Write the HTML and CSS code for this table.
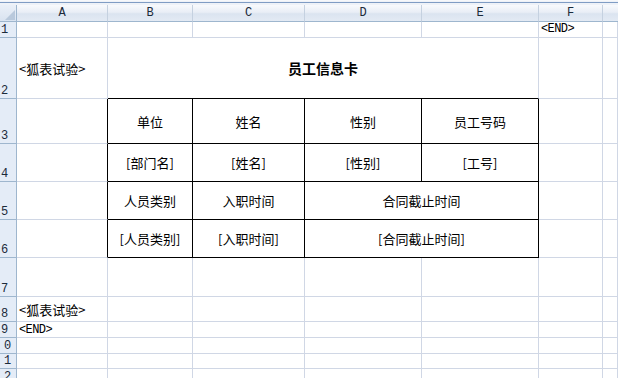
FILE: index.html
```html
<!DOCTYPE html>
<html>
<head>
<meta charset="utf-8">
<link rel="stylesheet" href="styles.css">
</head>
<body>
<div class="topbar"></div>
<div class="sheet">
  <div class="corner"><svg width="10" height="10" viewBox="0 0 10 10"><polygon points="10,0 10,10 0,10" fill="#b9c9dc"/></svg></div>
  <div class="colhdr">A</div>
  <div class="colhdr">B</div>
  <div class="colhdr">C</div>
  <div class="colhdr">D</div>
  <div class="colhdr">E</div>
  <div class="colhdr">F</div>
  <div class="colhdr last"></div>

  <!-- row 1 -->
  <div class="rowhdr"><span>1</span></div>
  <div class="cell"></div><div class="cell"></div><div class="cell"></div><div class="cell"></div><div class="cell"></div>
  <div class="cell mono top">&lt;END&gt;</div>
  <div class="cell"></div>

  <!-- row 2 -->
  <div class="rowhdr"><span>2</span></div>
  <div class="cell left">&lt;狐表试验&gt;</div>
  <div class="cell title span4 below">员工信息卡</div>
  <div class="cell"></div>
  <div class="cell"></div>

  <!-- row 3 -->
  <div class="rowhdr"><span>3</span></div>
  <div class="cell edge"></div>
  <div class="cell t">单位</div>
  <div class="cell t">姓名</div>
  <div class="cell t">性别</div>
  <div class="cell t">员工号码</div>
  <div class="cell"></div><div class="cell"></div>

  <!-- row 4 -->
  <div class="rowhdr"><span>4</span></div>
  <div class="cell edge"></div>
  <div class="cell t">[部门名]</div>
  <div class="cell t">[姓名]</div>
  <div class="cell t">[性别]</div>
  <div class="cell t">[工号]</div>
  <div class="cell"></div><div class="cell"></div>

  <!-- row 5 -->
  <div class="rowhdr"><span>5</span></div>
  <div class="cell edge"></div>
  <div class="cell t">人员类别</div>
  <div class="cell t">入职时间</div>
  <div class="cell t span2">合同截止时间</div>
  <div class="cell"></div><div class="cell"></div>

  <!-- row 6 -->
  <div class="rowhdr"><span>6</span></div>
  <div class="cell edge"></div>
  <div class="cell t">[人员类别]</div>
  <div class="cell t">[入职时间]</div>
  <div class="cell t span2">[合同截止时间]</div>
  <div class="cell"></div><div class="cell"></div>

  <!-- row 7 -->
  <div class="rowhdr"><span>7</span></div>
  <div class="cell"></div><div class="cell"></div><div class="cell"></div><div class="cell"></div><div class="cell"></div><div class="cell"></div><div class="cell"></div>

  <!-- row 8 -->
  <div class="rowhdr"><span>8</span></div>
  <div class="cell left">&lt;狐表试验&gt;</div>
  <div class="cell"></div><div class="cell"></div><div class="cell"></div><div class="cell"></div><div class="cell"></div><div class="cell"></div>

  <!-- row 9 -->
  <div class="rowhdr"><span>9</span></div>
  <div class="cell mono">&lt;END&gt;</div>
  <div class="cell"></div><div class="cell"></div><div class="cell"></div><div class="cell"></div><div class="cell"></div><div class="cell"></div>

  <!-- row 10 -->
  <div class="rowhdr"><span class="second">0</span></div>
  <div class="cell"></div><div class="cell"></div><div class="cell"></div><div class="cell"></div><div class="cell"></div><div class="cell"></div><div class="cell"></div>

  <!-- row 11 -->
  <div class="rowhdr"><span class="second">1</span></div>
  <div class="cell"></div><div class="cell"></div><div class="cell"></div><div class="cell"></div><div class="cell"></div><div class="cell"></div><div class="cell"></div>

  <!-- row 12 -->
  <div class="rowhdr"><span class="second">2</span></div>
  <div class="cell"></div><div class="cell"></div><div class="cell"></div><div class="cell"></div><div class="cell"></div><div class="cell"></div><div class="cell"></div>
</div>
</body>
</html>
```
FILE: styles.css
```css
html, body {
  margin: 0;
  padding: 0;
  background: #ffffff;
  overflow: hidden;
}
body {
  width: 618px;
  height: 378px;
  font-family: "Noto Sans CJK SC", sans-serif;
  font-size: 13px;
  color: #000;
}
.topbar {
  height: 5px;
  box-sizing: border-box;
  background: #eef2f8;
  border-top: 1px solid #f6f8fb;
}
.topbar::after {
  content: "";
  display: block;
  height: 1px;
  margin-top: 1px;
  background: #7f9cc4;
}
.sheet {
  display: grid;
  grid-template-columns: 17px 91px 85px 112px 117px 117px 64px 1fr;
  grid-template-rows: 17px 16px 61px 45px 38px 38px 38px 39px 25px 16px 16px 15px 16px;
}
.sheet > div {
  box-sizing: border-box;
  min-width: 0;
  overflow: hidden;
}
.corner {
  background: linear-gradient(#eaf0f8, #d9e3f0);
  border-right: 1px solid #9eb6ce;
  border-bottom: 1px solid #9eb6ce;
  display: flex;
  align-items: flex-end;
  justify-content: flex-end;
  padding: 0 1px 1px 0;
}
.corner svg { display: block; }
.colhdr {
  background: linear-gradient(#f8fafd 0%, #e9eef6 45%, #dbe4f0 55%, #e3eaf4 100%);
  border-right: 1px solid #c5d1e0;
  border-bottom: 1px solid #9eb6ce;
  font-family: "Liberation Mono", monospace;
  font-size: 12px;
  line-height: 16px;
  text-align: center;
  color: #1b2a3a;
}
.colhdr.last { border-right: none; }
.rowhdr {
  background: #e4ecf7;
  border-right: 1px solid #9eb6ce;
  border-bottom: 1px solid #9eb6ce;
  display: flex;
  align-items: flex-end;
}
.rowhdr span {
  display: block;
  padding-left: 1px;
  font-family: "Liberation Mono", monospace;
  font-size: 12px;
  line-height: 14px;
  color: #1b2a3a;
}
.rowhdr span.second { padding-left: 4px; }
.cell {
  border-right: 1px solid #d0d7e5;
  border-bottom: 1px solid #d0d7e5;
  display: flex;
  align-items: center;
  white-space: nowrap;
}
.sheet > .cell.left {
  padding-left: 2px;
  overflow: visible;
}
.sheet > .cell.mono {
  font-family: "Liberation Mono", monospace;
  font-size: 12px;
  letter-spacing: -0.6px;
  padding-left: 2px;
  overflow: visible;
}
.cell.top { align-items: flex-start; line-height: 14px; }
.cell.title {
  justify-content: center;
  font-weight: bold;
  font-size: 14px;
}
.span4 { grid-column: span 4; }
.span2 { grid-column: span 2; }
.cell.below { border-bottom-color: #000; }
.cell.edge { border-right-color: #000; }
.cell.t {
  justify-content: center;
  border-right-color: #000;
  border-bottom-color: #000;
}
```
